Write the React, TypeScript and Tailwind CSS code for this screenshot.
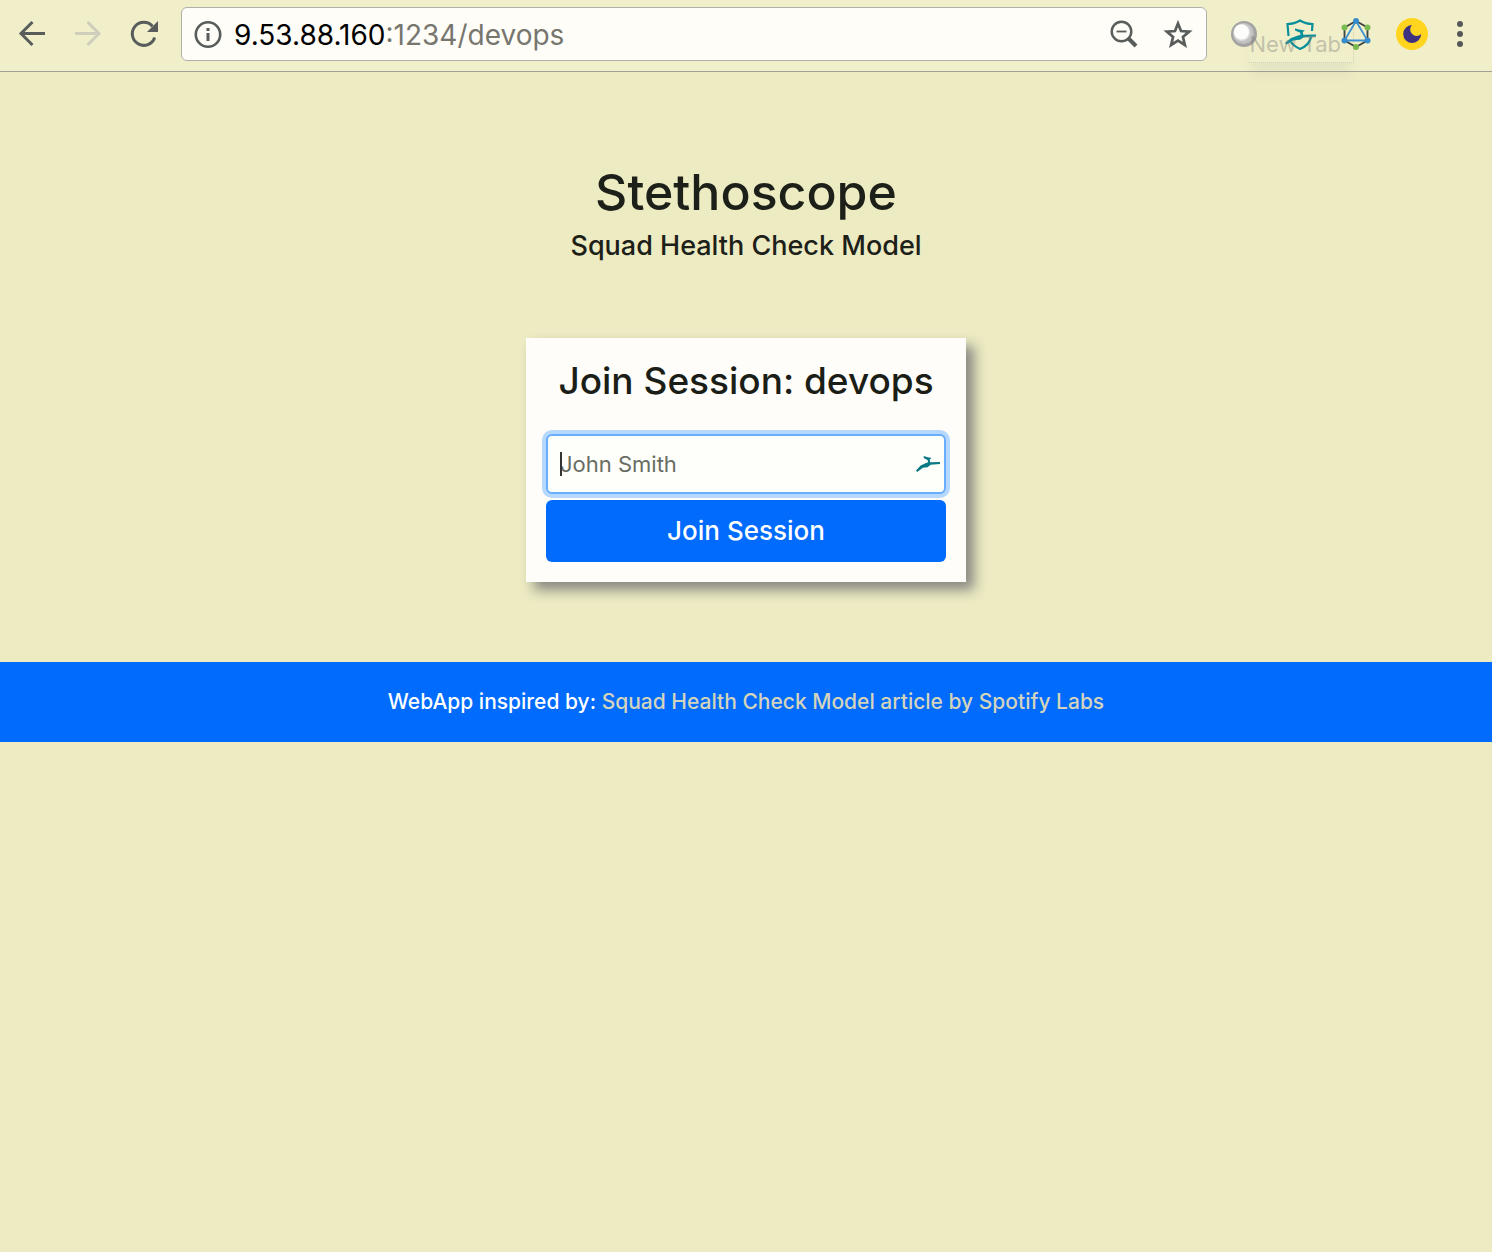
import React from "react";

const stroke = "#585c5a";

function BackIcon() {
  return (
    <svg className="size-8" viewBox="0 0 32 32" fill="none" stroke={stroke} strokeWidth="3">
      <path d="M29 15.500H5M16.500 4 5 15.500 16.500 27" />
    </svg>
  );
}

function ForwardIcon() {
  return (
    <svg className="size-8" viewBox="0 0 32 32" fill="none" stroke="#cfcebc" strokeWidth="3">
      <path d="M3 15.500h24M15.500 4 27 15.500 15.500 27" />
    </svg>
  );
}

function ReloadIcon() {
  return (
    <svg className="size-8" viewBox="0 0 32 32" fill="none" stroke={stroke} strokeWidth="3">
      <path d="M26.7 19.5A11.5 11.5 0 1 1 24.5 8.3" />
      <path d="M30 3v11H19z" fill={stroke} stroke="none" />
    </svg>
  );
}

function InfoIcon() {
  return (
    <svg className="size-8 shrink-0" viewBox="0 0 32 32" fill="none" stroke={stroke} strokeWidth="2.6">
      <circle cx="16" cy="16.500" r="12.200" />
      <path d="M16 15v8M16 10v3" strokeWidth="3" />
    </svg>
  );
}

function ZoomOutIcon() {
  return (
    <svg className="size-8" viewBox="0 0 32 32" fill="none" stroke={stroke}>
      <circle cx="13.500" cy="13.500" r="9.8" strokeWidth="2.4" />
      <path d="M8.500 13.500h10" strokeWidth="1.8" />
      <path d="m20.500 20.500 7.500 7.500" strokeWidth="4" />
    </svg>
  );
}

function StarIcon() {
  return (
    <svg className="size-8" viewBox="0 0 32 32" fill="none" stroke={stroke} strokeWidth="2.7">
      <path d="m16 5.500 3 7.500 8.200.6-6.300 5.300 2 8.100-6.900-4.400L9.100 27l2-8.100-6.300-5.300L13 13z" />
    </svg>
  );
}

function SphereIcon() {
  return (
    <svg className="size-8" viewBox="0 0 32 32">
      <circle cx="16" cy="16" r="13" fill="#a3a3a1" />
      <circle cx="15.500" cy="15.500" r="10.500" fill="#c2c2c2" />
      <circle cx="14" cy="14.500" r="8.500" fill="#dcdcdc" />
      <circle cx="13.500" cy="14" r="7.500" fill="#fdfdfc" />
    </svg>
  );
}

const gazelle =
  "M0 14.500 6 9.500l7-2.500 2.500-.8-.3-2L10 2V0l4 1 6 1-2.200 1.600.5 2.600L31 6v2l-12 .8-4 2.400-6 .6L1.500 16z";

function ShieldIcon() {
  return (
    <svg className="size-8" viewBox="0 0 32 32" fill="none" stroke="#0b8f9a" strokeWidth="2.2">
      <path d="M4.500 18 3.500 6c5 0 8.500-1 12.500-3.500C20 5 24 6 28.500 6L28 13M27 19c-1 5.500-5 9.500-11 12-4-2-7-3.500-9-7" />
      <path d={gazelle} transform="translate(1 10.500)" fill="#0b8f9a" stroke="none" />
    </svg>
  );
}

function GraphIcon() {
  return (
    <svg className="size-8" viewBox="0 0 32 32">
      <path d="m16 3 11.500 6.500v13L16 29 4.500 22.500v-13z" fill="none" stroke="#3c403e" strokeWidth="1.8" />
      <path d="M16 3 4.500 22.500h23z" fill="none" stroke="#3c92d0" strokeWidth="1.8" />
      <g fill="#79bb50">
        <circle cx="4.500" cy="9.500" r="3" />
        <circle cx="27.500" cy="9.500" r="3" />
        <circle cx="16" cy="29" r="3" />
      </g>
      <g fill="#378ccb">
        <circle cx="16" cy="3" r="3" />
        <circle cx="4.500" cy="22.500" r="3" />
        <circle cx="27.500" cy="22.500" r="3" />
      </g>
    </svg>
  );
}

function MoonIcon() {
  return (
    <svg className="size-8" viewBox="0 0 32 32">
      <circle cx="16" cy="16" r="16" fill="#ffd51f" />
      <path d="M16 7a6 6 0 0 0 9.200 9A9 9 0 1 1 16 7z" fill="#3d3180" />
    </svg>
  );
}

function MenuIcon() {
  return (
    <svg className="size-8" viewBox="0 0 32 32" fill="#555857">
      <circle cx="16" cy="6" r="3" />
      <circle cx="16" cy="16" r="3" />
      <circle cx="16" cy="26" r="3" />
    </svg>
  );
}

function Toolbar() {
  return (
    <header className="relative flex h-18 items-center border-b border-[#a0a094] bg-[#f0efca] px-4 pb-1">
      <nav aria-label="Navigation" className="flex gap-6">
        <button aria-label="Back"><BackIcon /></button>
        <button aria-label="Forward" disabled><ForwardIcon /></button>
        <button aria-label="Reload"><ReloadIcon /></button>
      </nav>
      <div className="ml-[21px] flex h-[54px] min-w-0 flex-1 items-center rounded-md border border-[#b0b0aa] bg-[#fefdf8] pr-3 pl-2.5">
        <button aria-label="Site information"><InfoIcon /></button>
        <div className="ml-2.5 min-w-0 flex-1 truncate pt-0.5 text-[28px] text-[#76766f]">
          <span className="text-black">9.53.88.160</span>:1234/devops
        </div>
        <div className="flex gap-[22px]">
          <button aria-label="Zoom out"><ZoomOutIcon /></button>
          <button aria-label="Bookmark"><StarIcon /></button>
        </div>
      </div>
      <div className="ml-[21px] flex gap-6">
        <button aria-label="Sphere extension"><SphereIcon /></button>
        <button aria-label="Password manager"><ShieldIcon /></button>
        <button aria-label="Graph extension"><GraphIcon /></button>
        <button aria-label="Night mode"><MoonIcon /></button>
      </div>
      <button aria-label="Menu" className="ml-4"><MenuIcon /></button>
      <div className="pointer-events-none absolute top-7 right-[138px] border-r border-b border-dotted border-[#77777744] pr-3 pb-0.5 text-[22px] leading-8 text-[#77777766] shadow-[0_14px_12px_-4px_#77777718]">
        New Tab
      </div>
    </header>
  );
}

function JoinCard() {
  return (
    <form
      className="mx-auto mt-[74px] w-[440px] bg-[#fefdf9] p-5 shadow-[8px_8px_12px_#888882]"
      onSubmit={(event) => event.preventDefault()}
    >
      <h2 className="text-center text-[37px] leading-[46px] font-medium text-[#1b1e17]">Join Session: devops</h2>
      <div className="relative mt-[30px]">
        <input
          aria-label="Your name"
          placeholder="John Smith"
          className="block h-[60px] w-full rounded-md border-2 border-[#69adff] bg-[#fefefa] px-3 text-[22px] text-[#1b1e17] ring-4 ring-[#b5d8fc] outline-none placeholder:text-[#686c62]"
        />
        <span className="absolute top-[18px] left-3.5 h-6 w-0.5 bg-[#333]" />
        <svg className="absolute top-[22px] right-1.5 h-4 w-6" viewBox="0 0 31 16" fill="#0a7985" preserveAspectRatio="none">
          <path d={gazelle} />
        </svg>
      </div>
      <button className="mt-1.5 block h-[62px] w-full rounded-md bg-[#006bfc] pb-0.5 text-[26px] font-medium text-white">
        Join Session
      </button>
    </form>
  );
}

export default function App() {
  return (
    <div className="min-h-screen bg-[#ecebc2] font-['Inter',sans-serif]">
      <Toolbar />
      <main className="pt-[88px] pb-20">
        <h1 className="text-center text-[50px] leading-16 font-medium text-[#1d2018]">Stethoscope</h1>
        <p className="mt-1 text-center text-[27px] leading-9 font-medium text-[#1d2018]">Squad Health Check Model</p>
        <JoinCard />
      </main>
      <footer className="bg-[#006bfc] px-4 py-6 text-center text-[21px] leading-8 font-medium text-white">
        WebApp inspired by:{" "}
        <a href="#article" className="text-[#d4d4bc]">Squad Health Check Model article by Spotify Labs</a>
      </footer>
    </div>
  );
}
